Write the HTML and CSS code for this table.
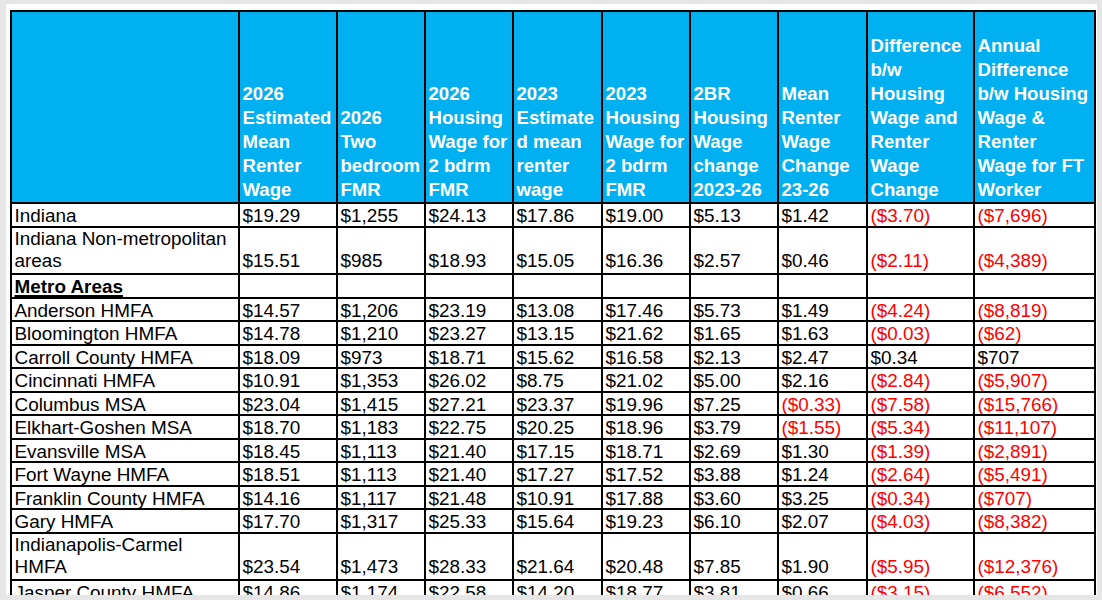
FILE: index.html
```html
<!DOCTYPE html>
<html lang="en">
<head>
<meta charset="utf-8">
<title>Indiana Housing Wage Table</title>
<link rel="stylesheet" href="styles.css">
</head>
<body>
<div class="sheet">
<table class="grid">
<colgroup>
<col class="c-name"><col class="c2"><col class="c3"><col class="c4"><col class="c5"><col class="c6"><col class="c7"><col class="c8"><col class="c9"><col class="c10">
</colgroup>
<thead>
<tr>
<th></th>
<th>2026<br>Estimated<br>Mean<br>Renter<br>Wage</th>
<th>2026<br>Two<br>bedroom<br>FMR</th>
<th>2026<br>Housing<br>Wage for<br>2 bdrm<br>FMR</th>
<th>2023<br>Estimate<br>d mean<br>renter<br>wage</th>
<th>2023<br>Housing<br>Wage for<br>2 bdrm<br>FMR</th>
<th>2BR<br>Housing<br>Wage<br>change<br>2023-26</th>
<th>Mean<br>Renter<br>Wage<br>Change<br>23-26</th>
<th>Difference<br>b/w<br>Housing<br>Wage and<br>Renter<br>Wage<br>Change</th>
<th>Annual<br>Difference<br>b/w Housing<br>Wage &amp;<br>Renter<br>Wage for FT<br>Worker</th>
</tr>
</thead>
<tbody>
<tr><td>Indiana</td><td>$19.29</td><td>$1,255</td><td>$24.13</td><td>$17.86</td><td>$19.00</td><td>$5.13</td><td>$1.42</td><td class="neg">($3.70)</td><td class="neg">($7,696)</td></tr>
<tr class="two"><td>Indiana Non-metropolitan<br>areas</td><td>$15.51</td><td>$985</td><td>$18.93</td><td>$15.05</td><td>$16.36</td><td>$2.57</td><td>$0.46</td><td class="neg">($2.11)</td><td class="neg">($4,389)</td></tr>
<tr><td class="section">Metro Areas</td><td></td><td></td><td></td><td></td><td></td><td></td><td></td><td></td><td></td></tr>
<tr><td>Anderson HMFA</td><td>$14.57</td><td>$1,206</td><td>$23.19</td><td>$13.08</td><td>$17.46</td><td>$5.73</td><td>$1.49</td><td class="neg">($4.24)</td><td class="neg">($8,819)</td></tr>
<tr><td>Bloomington HMFA</td><td>$14.78</td><td>$1,210</td><td>$23.27</td><td>$13.15</td><td>$21.62</td><td>$1.65</td><td>$1.63</td><td class="neg">($0.03)</td><td class="neg">($62)</td></tr>
<tr><td>Carroll County HMFA</td><td>$18.09</td><td>$973</td><td>$18.71</td><td>$15.62</td><td>$16.58</td><td>$2.13</td><td>$2.47</td><td>$0.34</td><td>$707</td></tr>
<tr><td>Cincinnati HMFA</td><td>$10.91</td><td>$1,353</td><td>$26.02</td><td>$8.75</td><td>$21.02</td><td>$5.00</td><td>$2.16</td><td class="neg">($2.84)</td><td class="neg">($5,907)</td></tr>
<tr><td>Columbus MSA</td><td>$23.04</td><td>$1,415</td><td>$27.21</td><td>$23.37</td><td>$19.96</td><td>$7.25</td><td class="neg">($0.33)</td><td class="neg">($7.58)</td><td class="neg">($15,766)</td></tr>
<tr><td>Elkhart-Goshen MSA</td><td>$18.70</td><td>$1,183</td><td>$22.75</td><td>$20.25</td><td>$18.96</td><td>$3.79</td><td class="neg">($1.55)</td><td class="neg">($5.34)</td><td class="neg">($11,107)</td></tr>
<tr><td>Evansville MSA</td><td>$18.45</td><td>$1,113</td><td>$21.40</td><td>$17.15</td><td>$18.71</td><td>$2.69</td><td>$1.30</td><td class="neg">($1.39)</td><td class="neg">($2,891)</td></tr>
<tr><td>Fort Wayne HMFA</td><td>$18.51</td><td>$1,113</td><td>$21.40</td><td>$17.27</td><td>$17.52</td><td>$3.88</td><td>$1.24</td><td class="neg">($2.64)</td><td class="neg">($5,491)</td></tr>
<tr><td>Franklin County HMFA</td><td>$14.16</td><td>$1,117</td><td>$21.48</td><td>$10.91</td><td>$17.88</td><td>$3.60</td><td>$3.25</td><td class="neg">($0.34)</td><td class="neg">($707)</td></tr>
<tr><td>Gary HMFA</td><td>$17.70</td><td>$1,317</td><td>$25.33</td><td>$15.64</td><td>$19.23</td><td>$6.10</td><td>$2.07</td><td class="neg">($4.03)</td><td class="neg">($8,382)</td></tr>
<tr class="two"><td>Indianapolis-Carmel<br>HMFA</td><td>$23.54</td><td>$1,473</td><td>$28.33</td><td>$21.64</td><td>$20.48</td><td>$7.85</td><td>$1.90</td><td class="neg">($5.95)</td><td class="neg">($12,376)</td></tr>
<tr><td>Jasper County HMFA</td><td>$14.86</td><td>$1,174</td><td>$22.58</td><td>$14.20</td><td>$18.77</td><td>$3.81</td><td>$0.66</td><td class="neg">($3.15)</td><td class="neg">($6,552)</td></tr>
</tbody>
</table>
</div>
</body>
</html>
```
FILE: styles.css
```css
html, body {
  margin: 0;
  padding: 0;
  height: 600px;
  overflow: hidden;
  background: #e6e6e6;
}

.sheet {
  box-sizing: border-box;
  width: 1091px;
  height: 591px;
  margin: 4px 0 0 6px;
  padding: 6px 0 0 4px;
  background: #ffffff;
  overflow: hidden;
}

.grid {
  border-collapse: collapse;
  table-layout: fixed;
  width: 1086px;
  font-family: "Liberation Sans", Arial, sans-serif;
  font-size: 18.6px;
  color: #000;
}

.c-name { width: 228px; }
.c2 { width: 98px; }
.c3 { width: 88px; }
.c4 { width: 88px; }
.c5 { width: 89px; }
.c6 { width: 88px; }
.c7 { width: 88px; }
.c8 { width: 89px; }
.c9 { width: 107px; }
.c10 { width: 121px; }

.grid th,
.grid td {
  border: 2px solid #000;
  padding: 0 1px 0 2.5px;
  text-align: left;
  white-space: nowrap;
  overflow: hidden;
}

.grid th {
  background: #00b0f0;
  color: #ffffff;
  font-weight: bold;
  line-height: 24px;
  height: 190px;
  vertical-align: bottom;
}

.grid td {
  font-size: 18.9px;
  line-height: 19.5px;
  padding-top: 2px;
  vertical-align: bottom;
}

.grid tr.two td {
  line-height: 22.75px;
  padding-top: 0;
}

.grid td.neg {
  color: #ff0000;
}

.grid td.section {
  font-weight: bold;
  text-decoration: underline;
  text-decoration-thickness: 2px;
  text-underline-offset: 2px;
}
```
